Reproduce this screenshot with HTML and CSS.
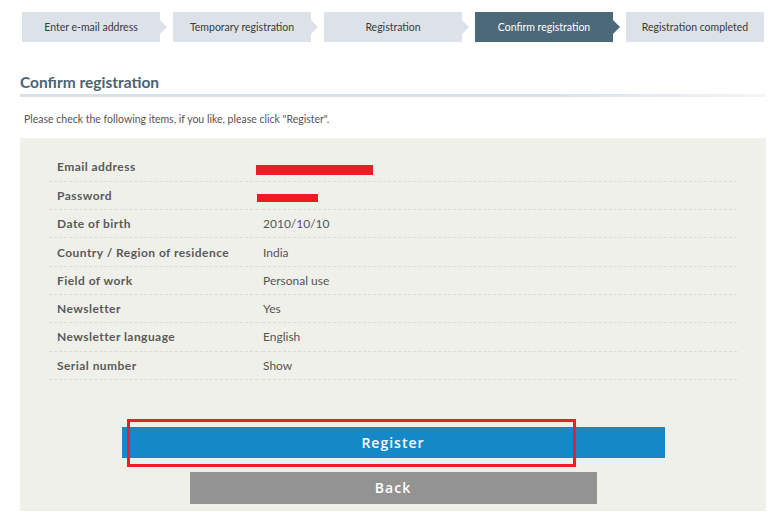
FILE: index.html
```html
<!DOCTYPE html>
<html lang="en">
<head>
  <meta charset="UTF-8">
  <title>Confirm registration</title>
  <link rel="stylesheet" href="styles.css">
</head>
<body>
  <!-- 단계 표시 -->
  <ol class="steps">
    <li class="step">Enter e-mail address</li>
    <li class="step">Temporary registration</li>
    <li class="step">Registration</li>
    <li class="step on">Confirm registration</li>
    <li class="step last">Registration completed</li>
  </ol>

  <h2 class="title">Confirm registration</h2>
  <p class="lead">Please check the following items, if you like, please click "Register".</p>

  <div class="panel">
    <table class="confirm">
      <tr><th>Email address</th><td><span class="mask mask-mail"></span></td></tr>
      <tr><th>Password</th><td><span class="mask mask-pass"></span></td></tr>
      <tr><th>Date of birth</th><td>2010/10/10</td></tr>
      <tr><th>Country / Region of residence</th><td>India</td></tr>
      <tr><th>Field of work</th><td>Personal use</td></tr>
      <tr><th>Newsletter</th><td>Yes</td></tr>
      <tr><th>Newsletter language</th><td>English</td></tr>
      <tr><th>Serial number</th><td>Show</td></tr>
    </table>

    <div class="btns">
      <div class="btn-wrap">
        <button class="btn btn-reg">Register</button>
        <span class="mark"></span>
      </div>
      <button class="btn btn-back">Back</button>
    </div>
  </div>
</body>
</html>
```

FILE: styles.css
```css
*{margin: 0; padding: 0; box-sizing: border-box;}
body{
  font-family: "Lato", "Open Sans", sans-serif;
  color: #555;
  background: #fff;
  width: 768px; height: 512px;
  overflow: hidden;
}

/* 단계 */
.steps{
  list-style: none;
  display: flex;
  gap: 13px;
  padding: 12px 0 0 22px;
}
.step{
  width: 138px; height: 30px;
  background: #dce2e7;
  color: #3a3a3a;
  font-size: 10.5px;
  display: flex;
  align-items: center;
  justify-content: center;
  position: relative;
}
.step::after{
  content: "";
  position: absolute;
  right: -7px; top: 8px;
  border-left: 7px solid #dce2e7;
  border-top: 7px solid transparent;
  border-bottom: 7px solid transparent;
}
.step.last::after{display: none;}
.step.on{background: #4b6979; color: #fff;}
.step.on::after{border-left-color: #4b6979;}

/* 제목 */
.title{
  margin: 31px 2px 0 20px;
  padding-bottom: 3px;
  font-size: 15.5px;
  color: #4a6474;
  border-bottom: 3px solid;
  border-image: linear-gradient(to right, #d9e0e6 70%, #f3f5f7) 1;
}
.lead{
  margin: 16px 0 0 24px;
  font-size: 10.5px;
  color: #555;
}

/* 확인 패널 */
.panel{
  margin: 13px 2px 0 20px;
  background: #f0f0eb;
  padding: 15px 29px 0;
  height: 373px;
}
.confirm{
  width: 100%;
  border-collapse: collapse;
  font-size: 12px;
}
.confirm tr{height: 28.3px; border-bottom: 1px dashed #dcdcd6;}
.confirm th{
  text-align: left;
  width: 214px;
  padding-left: 8px;
  font-weight: bold;
  letter-spacing: 0.45px;
  color: #5a5a5a;
}
.confirm td{color: #555;}
.mask{display: inline-block; background: #ed1c24; vertical-align: middle; margin-left: -7px;}
.mask-mail{width: 117px; height: 10px; margin-top: 3px;}
.mask-pass{width: 61px; height: 8px; margin-left: -6px; margin-top: 2px;}

/* 버튼 */
.btns{
  display: flex;
  flex-direction: column;
  align-items: center;
  gap: 14px;
  margin-top: 47px;
}
.btn-wrap{position: relative;}
.btn{
  display: block;
  border: 0;
  color: #fff;
  font-family: "Open Sans", sans-serif;
  font-size: 14px;
  font-weight: 600;
  letter-spacing: 1px;
}
.btn-reg{width: 543px; height: 31px; background: #1589c8;}
.btn-back{width: 407px; height: 32px; background: #939393;}
.mark{
  position: absolute;
  left: 5px; top: -8px;
  width: 449px; height: 48px;
  border: 3px solid #e8202a;
}
```
